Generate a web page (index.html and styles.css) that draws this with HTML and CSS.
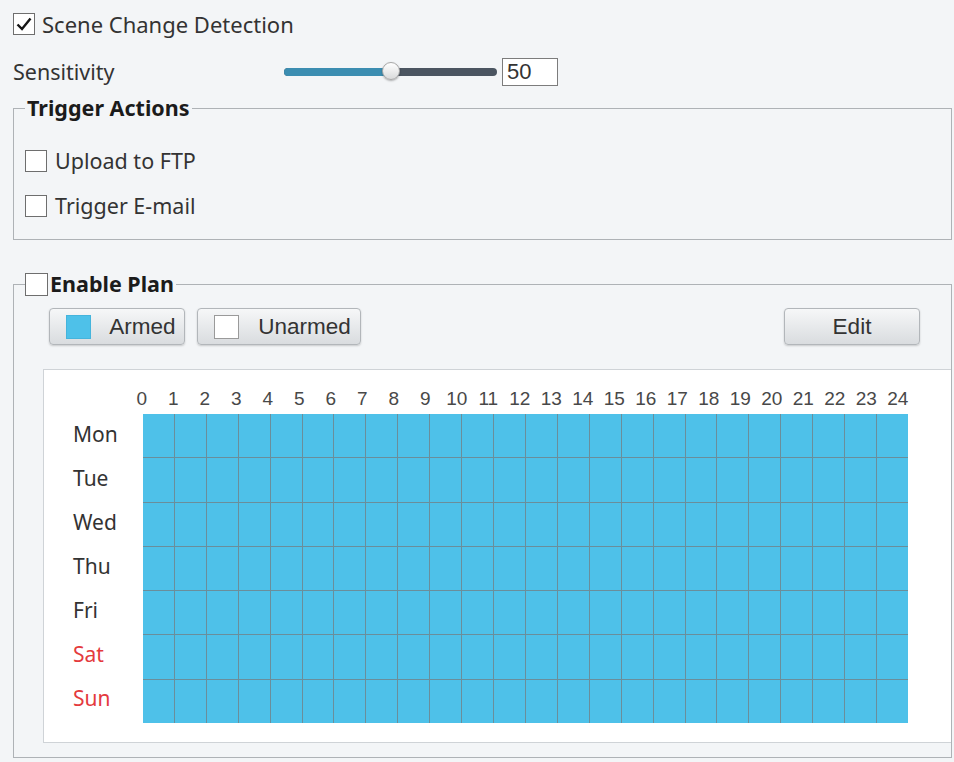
FILE: index.html
```html
<!DOCTYPE html>
<html>
<head>
<meta charset="utf-8">
<title>Scene Change Detection</title>
<link rel="stylesheet" href="styles.css">
</head>
<body>
<div class="page">
  <div class="row row-top">
    <span class="cb cb-checked"><svg viewBox="0 0 20 20"><path d="M3.5 10.5 L8 15 L16.5 4.5"/></svg></span>
    <span class="txt">Scene Change Detection</span>
  </div>
  <div class="row row-sens">
    <span class="sens-label">Sensitivity</span>
    <div class="slider">
      <div class="slider-fill" style="width:50%"></div>
      <div class="slider-thumb" style="left:50%"></div>
    </div>
    <div class="num-box">50</div>
  </div>

  <fieldset class="group group-trigger">
    <legend class="legend-text">Trigger Actions</legend>
    <div class="row opt"><span class="cb"></span><span class="txt">Upload to FTP</span></div>
    <div class="row opt"><span class="cb"></span><span class="txt">Trigger E-mail</span></div>
  </fieldset>

  <fieldset class="group group-plan">
    <legend class="legend-check"><span class="cb cb-legend"></span><span class="legend-label">Enable Plan</span></legend>
    <div class="btn-row">
      <button class="btn btn-mode btn-armed"><span class="swatch swatch-armed"></span><span class="btn-label">Armed</span></button>
      <button class="btn btn-mode btn-unarmed"><span class="swatch swatch-unarmed"></span><span class="btn-label">Unarmed</span></button>
      <button class="btn btn-edit">Edit</button>
    </div>
    <div class="panel">
      <div class="hours">
        <span>0</span><span>1</span><span>2</span><span>3</span><span>4</span><span>5</span><span>6</span><span>7</span><span>8</span><span>9</span><span>10</span><span>11</span><span>12</span><span>13</span><span>14</span><span>15</span><span>16</span><span>17</span><span>18</span><span>19</span><span>20</span><span>21</span><span>22</span><span>23</span><span>24</span>
      </div>
      <div class="sched">
        <div class="days">
          <span class="day">Mon</span>
          <span class="day">Tue</span>
          <span class="day">Wed</span>
          <span class="day">Thu</span>
          <span class="day">Fri</span>
          <span class="day weekend">Sat</span>
          <span class="day weekend">Sun</span>
        </div>
        <div class="grid">
          <i></i><i></i><i></i><i></i><i></i><i></i><i></i><i></i><i></i><i></i><i></i><i></i><i></i><i></i><i></i><i></i><i></i><i></i><i></i><i></i><i></i><i></i><i></i><i></i>
          <i></i><i></i><i></i><i></i><i></i><i></i><i></i><i></i><i></i><i></i><i></i><i></i><i></i><i></i><i></i><i></i><i></i><i></i><i></i><i></i><i></i><i></i><i></i><i></i>
          <i></i><i></i><i></i><i></i><i></i><i></i><i></i><i></i><i></i><i></i><i></i><i></i><i></i><i></i><i></i><i></i><i></i><i></i><i></i><i></i><i></i><i></i><i></i><i></i>
          <i></i><i></i><i></i><i></i><i></i><i></i><i></i><i></i><i></i><i></i><i></i><i></i><i></i><i></i><i></i><i></i><i></i><i></i><i></i><i></i><i></i><i></i><i></i><i></i>
          <i></i><i></i><i></i><i></i><i></i><i></i><i></i><i></i><i></i><i></i><i></i><i></i><i></i><i></i><i></i><i></i><i></i><i></i><i></i><i></i><i></i><i></i><i></i><i></i>
          <i></i><i></i><i></i><i></i><i></i><i></i><i></i><i></i><i></i><i></i><i></i><i></i><i></i><i></i><i></i><i></i><i></i><i></i><i></i><i></i><i></i><i></i><i></i><i></i>
          <i></i><i></i><i></i><i></i><i></i><i></i><i></i><i></i><i></i><i></i><i></i><i></i><i></i><i></i><i></i><i></i><i></i><i></i><i></i><i></i><i></i><i></i><i></i><i></i>
        </div>
      </div>
    </div>
  </fieldset>
</div>
</body>
</html>
```

FILE: styles.css
```css
* { box-sizing: border-box; }
html, body { margin: 0; padding: 0; }
body {
  width: 954px;
  height: 762px;
  overflow: hidden;
  background: #f3f5f7;
  font-family: "Noto Sans", "Open Sans", "DejaVu Sans", sans-serif;
  color: #333;
}
.page { padding-top: 12px; }
.row { display: flex; align-items: center; }

/* checkboxes */
.cb {
  flex: none;
  display: inline-flex;
  width: 22px;
  height: 22px;
  border: 1.5px solid #6e6e6e;
  background: #fff;
}
.cb svg { width: 100%; height: 100%; }
.cb path { fill: none; stroke: #151515; stroke-width: 2.4; }

.row-top {
  height: 24px;
  padding-left: 13px;
  font-size: 22px;
  line-height: 24px;
}
.row-top .txt { margin-left: 7px; }

/* sensitivity */
.row-sens {
  margin-top: 22px;
  height: 28px;
  padding-left: 13px;
  font-size: 21.5px;
  line-height: 24px;
}
.sens-label { width: 271px; flex: none; }
.slider {
  position: relative;
  width: 213px;
  height: 8px;
  border-radius: 4px;
  background: #4b5561;
}
.slider-fill {
  height: 100%;
  border-radius: 4px 0 0 4px;
  background: #3b8db1;
}
.slider-thumb {
  position: absolute;
  top: -6px;
  width: 18px;
  height: 18px;
  margin-left: -9px;
  border-radius: 50%;
  background: linear-gradient(#ffffff, #d9dadb);
  border: 1px solid #a8a8a8;
  box-shadow: 0 1px 2px rgba(0, 0, 0, 0.3);
}
.num-box {
  margin-left: 5px;
  width: 56px;
  height: 28px;
  border: 1px solid #7c7c7c;
  background: #fff;
  padding-left: 4px;
  font-family: "Liberation Sans", Arial, sans-serif;
  font-size: 22px;
  line-height: 26px;
  color: #333;
}

/* fieldsets */
.group {
  margin: 0 2px 0 13px;
  border: 1px solid #aeb2b6;
  padding: 0 0 0 11px;
  min-width: 0;
}
.group legend {
  padding: 0 2px;
  height: 24px;
  font-size: 21.5px;
  line-height: 24px;
  font-weight: 700;
  color: #1b1b1b;
}
.group-trigger {
  margin-top: 10px;
  padding-top: 29px;
  padding-bottom: 21px;
}
.opt {
  height: 24px;
  font-size: 21.5px;
  line-height: 24px;
}
.opt + .opt { margin-top: 21px; }
.opt .txt { margin-left: 8px; }

.group-plan {
  margin-top: 32px;
  padding-top: 12px;
  padding-bottom: 14px;
}
.group-plan legend.legend-check {
  display: flex;
  align-items: center;
  padding: 0;
}
.cb-legend { width: 23px; height: 23px; }
.legend-label { margin-left: 2px; padding-right: 2px; }

/* buttons */
.btn-row {
  display: flex;
  gap: 12px;
  margin-left: 24px;
  padding-right: 31px;
}
.btn {
  display: flex;
  align-items: center;
  height: 37px;
  padding: 0;
  border: 1px solid #b2b6ba;
  border-radius: 4px;
  background: linear-gradient(#f6f7f8, #d9dcdf);
  box-shadow: 0 1px 2px rgba(0, 0, 0, 0.18);
  font-family: "Liberation Sans", Arial, sans-serif;
  font-size: 22.5px;
  color: #333;
}
.btn-mode { padding-left: 16px; }
.btn-armed { width: 136px; }
.btn-unarmed { width: 164px; }
.btn-edit { width: 136px; margin-left: auto; justify-content: center; }
.swatch { flex: none; width: 25px; height: 24px; }
.swatch-armed { background: #4ec1e9; border: 1px solid #45b4dc; }
.swatch-unarmed { background: #fff; border: 1px solid #9a9a9a; }
.btn-label { flex: 1; text-align: center; padding-left: 10px; }

/* schedule panel */
.panel {
  margin: 24px 0 0 18px;
  padding: 19px 0 19px 29px;
  background: #fff;
  border: 1px solid #cfd3d7;
  border-right: none;
}
.hours {
  display: flex;
  height: 20px;
  margin: 0 0 5px 53px;
  font-family: "Liberation Sans", Arial, sans-serif;
  font-size: 19px;
  line-height: 20px;
  color: #484848;
}
.hours span { flex: none; width: 31.5px; text-align: center; }
.sched { display: flex; }
.days {
  flex: none;
  width: 70px;
  height: 309px;
  display: grid;
  grid-template-rows: repeat(7, 1fr);
  font-size: 21px;
  line-height: 24px;
  color: #333;
}
.day { display: flex; align-items: center; padding-bottom: 5px; }
.day.weekend { color: #e43a3d; }
.grid {
  width: 765px;
  height: 309px;
  display: grid;
  grid-template-columns: repeat(24, 1fr);
  grid-template-rows: repeat(7, 1fr);
  gap: 1px;
  background: #6a8e9b;
}
.grid i { display: block; background: #4ec1e9; }
```
